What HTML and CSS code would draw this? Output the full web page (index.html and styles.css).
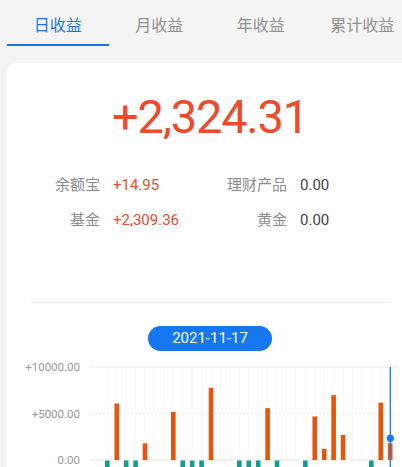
FILE: index.html
```html
<!DOCTYPE html>
<html lang="zh-CN">
<head>
  <meta charset="UTF-8">
  <meta name="viewport" content="width=device-width, initial-scale=1.0">
  <title>收益</title>
  <link rel="stylesheet" href="styles.css">
</head>
<body>
  <div class="page">
    <div class="tabs">
      <div class="tab active">日收益</div>
      <div class="tab">月收益</div>
      <div class="tab">年收益</div>
      <div class="tab">累计收益</div>
    </div>

    <div class="card">
      <div class="total">+2,324.31</div>

      <div class="stats">
        <span class="label">余额宝</span>
        <span class="value up">+14.95</span>
        <span class="label">理财产品</span>
        <span class="value">0.00</span>
        <span class="label">基金</span>
        <span class="value up">+2,309.36</span>
        <span class="label">黄金</span>
        <span class="value">0.00</span>
      </div>

      <div class="divider"></div>

      <div class="date-pill">2021-11-17</div>

      <svg class="chart" id="chart" width="406" height="120" viewBox="0 0 406 120"></svg>
    </div>
  </div>

  <script>
    // daily values, 0 = no change, negative = small loss
    const days = [-1, 6100, -1, -1, 1800, 0, 0, 5200, -1, -1, -1, 7800, 0, 0, -1, -1,
      -1, 5600, -1, 0, 0, -1, 4700, 1200, 7000, 2700, 0, 0, -1, 6200, 1800];

    const svg = document.getElementById('chart');
    const ns = 'http://www.w3.org/2000/svg';
    const zeroY = 105;
    const perUnit = 46.3 / 5000;
    const step = 9.43;
    const firstX = 98;

    function add(tag, attrs, text) {
      const el = document.createElementNS(ns, tag);
      for (const k in attrs) el.setAttribute(k, attrs[k]);
      if (text) el.textContent = text;
      svg.appendChild(el);
      return el;
    }

    // faint vertical lines
    days.forEach((v, i) => {
      const cx = firstX + step * i + 2.25;
      add('line', { x1: cx, x2: cx, y1: 12.7, y2: zeroY, stroke: '#f8f8f8', 'stroke-width': 1 });
    });

    // axis labels + grid
    [[10000, '+10000.00'], [5000, '+5000.00'], [0, '0.00']].forEach(([v, t]) => {
      const y = zeroY - v * perUnit;
      add('text', { x: 73, y: y + 4, 'text-anchor': 'end', class: 'axis' }, t);
      if (v > 0) {
        add('line', { x1: 84, x2: 390, y1: y, y2: y, stroke: '#e9e9e9', 'stroke-dasharray': '2 2' });
      }
    });
    add('line', { x1: 84, x2: 390, y1: zeroY, y2: zeroY, stroke: '#f2e4da' });

    // bars
    days.forEach((v, i) => {
      const x = firstX + step * i;
      if (v > 0) {
        const h = v * perUnit;
        add('rect', { x: x, y: zeroY - h, width: 4.6, height: h, fill: '#e8530e' });
      } else if (v < 0) {
        add('rect', { x: x, y: zeroY + 0.5, width: 4.6, height: 14, fill: '#119f8b' });
      }
    });

    // selected day marker
    add('line', { x1: 383.3, x2: 383.3, y1: 12, y2: 120, stroke: '#1877f0', 'stroke-width': 1.3 });
    add('circle', { cx: 383.3, cy: 83.3, r: 3.6, fill: '#1877f0' });
  </script>
</body>
</html>
```

FILE: styles.css
```css
html, body {
  margin: 0;
  overflow: hidden;
}
body {
  background-color: #f4f4f4;
  font-family: Roboto, "Noto Sans CJK SC", sans-serif;
}
.page {
  width: 420px;
  height: 467px;
  overflow: hidden;
}
.tabs {
  display: flex;
  padding-left: 7px;
}
.tab {
  flex: 0 0 101.5px;
  box-sizing: border-box;
  height: 46px;
  padding-top: 16px;
  line-height: 20px;
  font-size: 16px;
  text-align: center;
  color: #909090;
  border-bottom: 2px solid transparent;
}
.tab.active {
  color: #1a73e8;
  border-bottom-color: #1a73e8;
}
.card {
  margin: 17px 7px 0;
  background-color: #fff;
  border-radius: 10px;
  padding-top: 26px;
  height: 500px;
}
.total {
  text-align: center;
  font-size: 47px;
  line-height: 56px;
  letter-spacing: -1.2px;
  color: #ef4a2c;
}
.stats {
  display: grid;
  grid-template-columns: 93px 100px 61px auto;
  column-gap: 13px;
  margin-top: 23px;
  font-size: 15px;
  line-height: 35px;
}
.label {
  text-align: right;
  color: #8c8c8c;
}
.value {
  color: #444;
}
.value.up {
  color: #ef4a2c;
}
.divider {
  margin: 64px 22px 0;
  height: 1px;
  background-color: #ebebeb;
}
.date-pill {
  width: 124px;
  height: 25px;
  margin: 23px auto 0;
  border-radius: 13px;
  background-color: #1677f2;
  color: #fff;
  font-size: 15px;
  line-height: 25px;
  text-align: center;
}
.chart {
  display: block;
  margin-top: 4px;
}
.axis {
  font-size: 11.5px;
  fill: #999;
  font-family: Roboto, sans-serif;
}
```
